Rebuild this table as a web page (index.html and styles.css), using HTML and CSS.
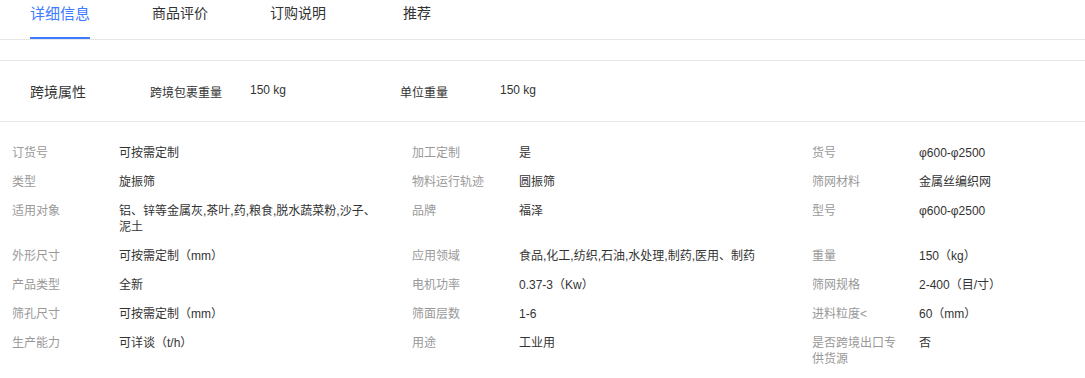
FILE: index.html
```html
<!DOCTYPE html>
<html lang="zh-CN">
<head>
<meta charset="utf-8">
<title>详细信息</title>
<link rel="stylesheet" href="styles.css">
</head>
<body>
<div class="page">
  <nav class="tabs">
    <div class="tab tab-active">详细信息</div>
    <div class="tab">商品评价</div>
    <div class="tab">订购说明</div>
    <div class="tab tab-last">推荐</div>
  </nav>

  <section class="cross">
    <div class="cross-title">跨境属性</div>
    <div class="cross-pair">
      <span class="cross-label">跨境包裹重量</span>
      <span class="cross-value">150 kg</span>
    </div>
    <div class="cross-pair">
      <span class="cross-label">单位重量</span>
      <span class="cross-value">150 kg</span>
    </div>
  </section>

  <section class="attrs">
    <div class="attr"><div class="attr-label">订货号</div><div class="attr-value">可按需定制</div></div>
    <div class="attr"><div class="attr-label">加工定制</div><div class="attr-value">是</div></div>
    <div class="attr"><div class="attr-label">货号</div><div class="attr-value">φ600-φ2500</div></div>

    <div class="attr"><div class="attr-label">类型</div><div class="attr-value">旋振筛</div></div>
    <div class="attr"><div class="attr-label">物料运行轨迹</div><div class="attr-value">圆振筛</div></div>
    <div class="attr"><div class="attr-label">筛网材料</div><div class="attr-value">金属丝编织网</div></div>

    <div class="attr"><div class="attr-label">适用对象</div><div class="attr-value">铝、锌等金属灰,茶叶,药,粮食,脱水蔬菜粉,沙子、泥土</div></div>
    <div class="attr"><div class="attr-label">品牌</div><div class="attr-value">福泽</div></div>
    <div class="attr"><div class="attr-label">型号</div><div class="attr-value">φ600-φ2500</div></div>

    <div class="attr"><div class="attr-label">外形尺寸</div><div class="attr-value">可按需定制（mm）</div></div>
    <div class="attr"><div class="attr-label">应用领域</div><div class="attr-value">食品,化工,纺织,石油,水处理,制药,医用、制药</div></div>
    <div class="attr"><div class="attr-label">重量</div><div class="attr-value">150（kg）</div></div>

    <div class="attr"><div class="attr-label">产品类型</div><div class="attr-value">全新</div></div>
    <div class="attr"><div class="attr-label">电机功率</div><div class="attr-value">0.37-3（Kw）</div></div>
    <div class="attr"><div class="attr-label">筛网规格</div><div class="attr-value">2-400（目/寸）</div></div>

    <div class="attr"><div class="attr-label">筛孔尺寸</div><div class="attr-value">可按需定制（mm）</div></div>
    <div class="attr"><div class="attr-label">筛面层数</div><div class="attr-value">1-6</div></div>
    <div class="attr"><div class="attr-label">进料粒度&lt;</div><div class="attr-value">60（mm）</div></div>

    <div class="attr"><div class="attr-label">生产能力</div><div class="attr-value">可详谈（t/h）</div></div>
    <div class="attr"><div class="attr-label">用途</div><div class="attr-value">工业用</div></div>
    <div class="attr"><div class="attr-label">是否跨境出口专供货源</div><div class="attr-value">否</div></div>
  </section>
</div>
</body>
</html>
```

FILE: styles.css
```css
html, body {
  margin: 0;
  padding: 0;
  background: #ffffff;
}

body {
  font-family: "Liberation Sans", "Noto Sans CJK SC", sans-serif;
  color: #333333;
  overflow: hidden;
}

.page {
  width: 1085px;
}

/* Tabs */
.tabs {
  display: flex;
  gap: 62px;
  padding-left: 30px;
  border-bottom: 1px solid #e6e6e6;
  height: 39px;
}

.tab {
  height: 27px;
  line-height: 27px;
  padding-bottom: 10px;
  border-bottom: 2px solid transparent;
  font-size: 14px;
  color: #333333;
  white-space: nowrap;
}

.tab-active {
  font-size: 15px;
  color: #3d7bff;
  border-bottom-color: #3d7bff;
}

.tab-last {
  margin-left: 15px;
}

/* Cross-border row */
.cross {
  margin-top: 20px;
  height: 60px;
  border-top: 1px solid #e6e6e6;
  border-bottom: 1px solid #e6e6e6;
  display: flex;
  align-items: center;
  padding-left: 30px;
}

.cross-title {
  width: 120px;
  font-size: 14px;
  color: #333333;
}

.cross-pair {
  width: 250px;
  display: flex;
  font-size: 12px;
  color: #333333;
}

.cross-label {
  width: 100px;
}

/* Attribute grid */
.attrs {
  display: grid;
  grid-template-columns: 400px 400px minmax(0, 1fr);
  padding: 23px 0 0 12px;
}

.attr {
  display: flex;
  align-items: flex-start;
  min-width: 0;
  font-size: 12px;
  line-height: 16px;
  padding-bottom: 13px;
}

.attr-label {
  width: 90px;
  margin-right: 17px;
  flex-shrink: 0;
  color: #999999;
}

.attr-value {
  flex: 0 1 262px;
  min-width: 0;
  color: #333333;
}
```
